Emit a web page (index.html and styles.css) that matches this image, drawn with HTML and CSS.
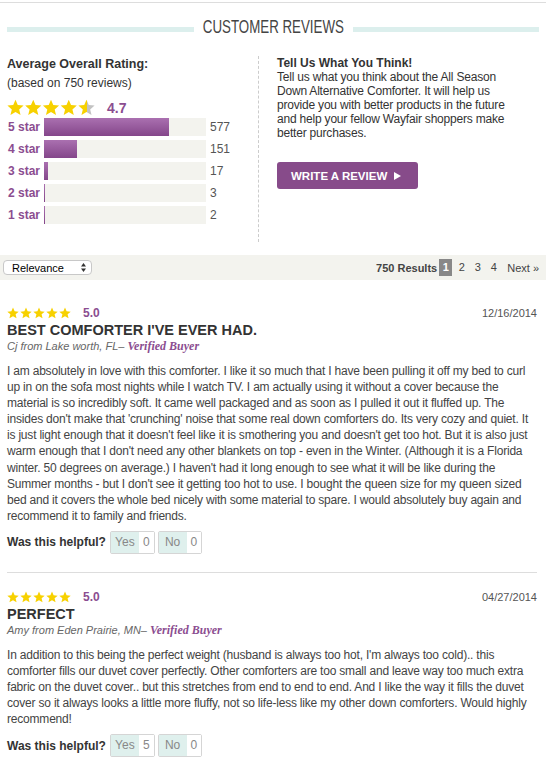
FILE: index.html
```html
<!DOCTYPE html>
<html lang="en">
<head>
    <meta charset="UTF-8">
    <meta name="viewport" content="width=device-width, initial-scale=1.0">
    <title>Customer Reviews</title>
    <link rel="stylesheet" href="styles.css">
</head>
<body>
    <div class="top-line"></div>
    <div class="page">
        <!-- Section heading -->
        <div class="section-title">
            <span class="rule"></span>
            <h2><span>CUSTOMER REVIEWS</span></h2>
            <span class="rule"></span>
        </div>

        <!-- Rating summary + write a review -->
        <div class="summary">
            <div class="overall">
                <div class="overall-title">Average Overall Rating:</div>
                <div class="overall-count">(based on 750 reviews)</div>
                <div class="overall-stars">
                    <svg width="88" height="17" viewBox="0 0 88 17">
                        <defs>
                            <linearGradient id="star-half">
                                <stop offset="52%" stop-color="#f7d100"/>
                                <stop offset="52%" stop-color="#c2c2c2"/>
                            </linearGradient>
                            <symbol id="star" viewBox="0 0 24 24">
                                <polygon points="12,1 15.2,8.6 23.4,9.3 17.2,14.7 19.1,22.7 12,18.4 4.9,22.7 6.8,14.7 0.6,9.3 8.8,8.6"/>
                            </symbol>
                        </defs>
                        <use href="#star" x="0" width="17" height="17" fill="#f7d100"/>
                        <use href="#star" x="17.75" width="17" height="17" fill="#f7d100"/>
                        <use href="#star" x="35.5" width="17" height="17" fill="#f7d100"/>
                        <use href="#star" x="53.25" width="17" height="17" fill="#f7d100"/>
                        <use href="#star" x="71" width="17" height="17" fill="url(#star-half)"/>
                    </svg>
                    <span class="overall-score">4.7</span>
                </div>
                <div class="bars">
                    <div class="bar-row">
                        <span class="bar-label">5 star</span>
                        <span class="bar-track"><span class="bar-fill" style="width: 76.9%"></span></span>
                        <span class="bar-count">577</span>
                    </div>
                    <div class="bar-row">
                        <span class="bar-label">4 star</span>
                        <span class="bar-track"><span class="bar-fill" style="width: 20.1%"></span></span>
                        <span class="bar-count">151</span>
                    </div>
                    <div class="bar-row">
                        <span class="bar-label">3 star</span>
                        <span class="bar-track"><span class="bar-fill" style="width: 2.3%"></span></span>
                        <span class="bar-count">17</span>
                    </div>
                    <div class="bar-row">
                        <span class="bar-label">2 star</span>
                        <span class="bar-track"><span class="bar-fill" style="width: 0.4%"></span></span>
                        <span class="bar-count">3</span>
                    </div>
                    <div class="bar-row">
                        <span class="bar-label">1 star</span>
                        <span class="bar-track"><span class="bar-fill" style="width: 0.3%"></span></span>
                        <span class="bar-count">2</span>
                    </div>
                </div>
            </div>

            <div class="tell-us">
                <div class="tell-us-title">Tell Us What You Think!</div>
                <p>Tell us what you think about the All Season Down Alternative Comforter. It will help us provide you with better products in the future and help your fellow Wayfair shoppers make better purchases.</p>
                <a href="#" class="write-btn">WRITE A REVIEW
                    <svg width="7" height="8" viewBox="0 0 7 8"><polygon points="0,0 7,4 0,8" fill="#fff"/></svg>
                </a>
            </div>
        </div>

        <!-- Sort + pagination -->
        <div class="toolbar">
            <div class="sort">
                <span>Relevance</span>
                <svg width="5" height="9" viewBox="0 0 5 9">
                    <polygon points="2.5,0 5,3.5 0,3.5" fill="#333"/>
                    <polygon points="0,5.5 5,5.5 2.5,9" fill="#333"/>
                </svg>
            </div>
            <div class="pager">
                <span class="results">750 Results</span>
                <span class="page-num current">1</span>
                <a href="#" class="page-num">2</a>
                <a href="#" class="page-num">3</a>
                <a href="#" class="page-num">4</a>
                <a href="#" class="next">Next &raquo;</a>
            </div>
        </div>

        <!-- Reviews -->
        <div class="reviews">
            <div class="review">
                <div class="review-top">
                    <div class="review-rating">
                        <svg width="64" height="12" viewBox="0 0 64 12" fill="#f7d100">
                            <use href="#star" x="0" width="12" height="12"/>
                            <use href="#star" x="13" width="12" height="12"/>
                            <use href="#star" x="26" width="12" height="12"/>
                            <use href="#star" x="39" width="12" height="12"/>
                            <use href="#star" x="52" width="12" height="12"/>
                        </svg>
                        <span class="review-score">5.0</span>
                    </div>
                    <span class="review-date">12/16/2014</span>
                </div>
                <h3 class="review-title">BEST COMFORTER I'VE EVER HAD.</h3>
                <div class="review-author">Cj from Lake worth, FL&ndash; <span class="verified">Verified Buyer</span></div>
                <p class="review-text">I am absolutely in love with this comforter. I like it so much that I have been pulling it off my bed to curl up in on the sofa most nights while I watch TV. I am actually using it without a cover because the material is so incredibly soft. It came well packaged and as soon as I pulled it out it fluffed up. The insides don't make that 'crunching' noise that some real down comforters do. Its very cozy and quiet. It is just light enough that it doesn't feel like it is smothering you and doesn't get too hot. But it is also just warm enough that I don't need any other blankets on top - even in the Winter. (Although it is a Florida winter. 50 degrees on average.) I haven't had it long enough to see what it will be like during the Summer months - but I don't see it getting too hot to use. I bought the queen size for my queen sized bed and it covers the whole bed nicely with some material to spare. I would absolutely buy again and recommend it to family and friends.</p>
                <div class="helpful">
                    <span class="helpful-label">Was this helpful?</span>
                    <a href="#" class="vote"><span class="vote-label">Yes</span><span class="vote-count">0</span></a>
                    <a href="#" class="vote"><span class="vote-label">No</span><span class="vote-count">0</span></a>
                </div>
            </div>

            <div class="review">
                <div class="review-top">
                    <div class="review-rating">
                        <svg width="64" height="12" viewBox="0 0 64 12" fill="#f7d100">
                            <use href="#star" x="0" width="12" height="12"/>
                            <use href="#star" x="13" width="12" height="12"/>
                            <use href="#star" x="26" width="12" height="12"/>
                            <use href="#star" x="39" width="12" height="12"/>
                            <use href="#star" x="52" width="12" height="12"/>
                        </svg>
                        <span class="review-score">5.0</span>
                    </div>
                    <span class="review-date">04/27/2014</span>
                </div>
                <h3 class="review-title">PERFECT</h3>
                <div class="review-author">Amy from Eden Prairie, MN&ndash; <span class="verified">Verified Buyer</span></div>
                <p class="review-text">In addition to this being the perfect weight (husband is always too hot, I'm always too cold).. this comforter fills our duvet cover perfectly. Other comforters are too small and leave way too much extra fabric on the duvet cover.. but this stretches from end to end to end. And I like the way it fills the duvet cover so it always looks a little more fluffy, not so life-less like my other down comforters. Would highly recommend!</p>
                <div class="helpful">
                    <span class="helpful-label">Was this helpful?</span>
                    <a href="#" class="vote"><span class="vote-label">Yes</span><span class="vote-count">5</span></a>
                    <a href="#" class="vote"><span class="vote-label">No</span><span class="vote-count">0</span></a>
                </div>
            </div>
        </div>
    </div>
</body>
</html>
```

FILE: styles.css
```css
/* General Reset */
* {
    margin: 0;
    padding: 0;
    box-sizing: border-box;
}

body {
    font-family: "Liberation Sans", Arial, sans-serif;
    color: #444;
    background-color: #ffffff;
}

a {
    text-decoration: none;
    color: inherit;
}

.top-line {
    margin-top: 2px;
    border-top: 1px solid #dddddd;
}

.page {
    padding: 0 7px;
}

/* Section heading */
.section-title {
    display: flex;
    align-items: center;
    height: 26px;
    margin-top: 11px;
}

.rule {
    flex: 1;
    height: 5px;
    margin-top: 5px;
    background-color: #dcefed;
}

.section-title h2 {
    width: 141px;
    margin: 0 9px;
    display: flex;
    justify-content: center;
    font-size: 18px;
    font-weight: normal;
    color: #444;
}

.section-title h2 span {
    white-space: nowrap;
    transform: scaleX(0.74);
}

/* Summary */
.summary {
    display: flex;
    height: 186px;
    margin-top: 16px;
}

.overall {
    width: 252px;
    border-right: 1px dashed #cccccc;
}

.overall-title {
    font-size: 12.5px;
    font-weight: bold;
    line-height: 16px;
    margin-bottom: 3px;
    color: #333;
}

.overall-count {
    font-size: 12px;
    line-height: 16px;
    color: #333;
}

.overall-stars {
    display: flex;
    align-items: center;
    height: 19px;
    margin-top: 7px;
}

.overall-score {
    margin-left: 12px;
    font-size: 14px;
    font-weight: bold;
    color: #8b4d90;
}

.bars {
    margin-top: 1px;
}

.bar-row {
    display: flex;
    align-items: center;
    height: 18px;
    margin-bottom: 4px;
}

.bar-label {
    width: 33px;
    text-align: right;
    font-size: 12px;
    font-weight: bold;
    color: #8b4d90;
}

.bar-track {
    display: flex;
    width: 162px;
    height: 18px;
    margin-left: 4px;
    background-color: #f3f3ee;
}

.bar-fill {
    min-width: 1px;
    height: 100%;
    background: linear-gradient(#aa70b0, #84468a);
}

.bar-count {
    margin-left: 4px;
    font-size: 12px;
    color: #555;
}

.tell-us {
    width: 262px;
    padding-left: 18px;
    font-size: 12px;
    line-height: 14px;
    color: #333;
}

.tell-us p {
    letter-spacing: -0.2px;
}

.tell-us-title {
    font-weight: bold;
}

.write-btn {
    display: flex;
    align-items: center;
    width: 141px;
    height: 27px;
    margin-top: 22px;
    padding-left: 14px;
    border-radius: 3px;
    background-color: #874b8a;
    color: #ffffff;
    font-size: 11.5px;
    font-weight: bold;
}

.write-btn svg {
    margin-left: 7px;
}

/* Toolbar */
.toolbar {
    display: flex;
    align-items: center;
    justify-content: space-between;
    height: 25px;
    margin: 13px -7px 0;
    padding: 0 7px 0 3px;
    background-color: #f3f3ee;
}

.sort {
    display: flex;
    align-items: center;
    justify-content: space-between;
    width: 89px;
    height: 15px;
    padding: 0 5px 0 8px;
    border: 1px solid #c8c8c8;
    border-radius: 4px;
    background-color: #ffffff;
    font-size: 11px;
    color: #000;
}

.pager {
    display: flex;
    align-items: center;
    font-size: 11px;
    color: #444;
}

.results {
    font-weight: bold;
    margin-right: 2px;
}

.page-num {
    width: 13px;
    height: 17px;
    line-height: 17px;
    margin-left: 3px;
    text-align: center;
}

.page-num.current {
    margin-left: 0;
    background-color: #888888;
    color: #ffffff;
    font-weight: bold;
}

.next {
    margin-left: 7px;
}

/* Reviews */
.reviews {
    margin-top: 9px;
}

.review {
    padding: 17px 0 18px;
    margin-right: 2px;
}

.review:first-child {
    border-bottom: 1px solid #dddddd;
}

.review-top {
    display: flex;
    align-items: center;
    justify-content: space-between;
    height: 14px;
}

.review-rating {
    display: flex;
    align-items: center;
}

.review-score {
    margin-left: 12px;
    font-size: 12px;
    font-weight: bold;
    color: #8b4d90;
}

.review-date {
    font-size: 11px;
    color: #555;
}

.review-title {
    margin-top: 2px;
    font-size: 14.5px;
    line-height: 17px;
    color: #333;
}

.review-author {
    font-size: 11px;
    line-height: 14px;
    font-style: italic;
    color: #666;
}

.verified {
    font-family: "Liberation Serif", "Times New Roman", serif;
    font-size: 12px;
    font-weight: bold;
    color: #8b4d90;
}

.review-text {
    margin-top: 10px;
    font-size: 12px;
    line-height: 16.1px;
    letter-spacing: -0.2px;
    color: #444;
}

.helpful {
    display: flex;
    align-items: center;
    height: 23px;
    margin-top: 7px;
}

.helpful-label {
    margin-right: 4px;
    font-size: 12px;
    font-weight: bold;
    color: #333;
}

.vote {
    display: flex;
    height: 23px;
    margin-right: 3px;
    border: 1px solid #d5d5d5;
    border-radius: 2px;
    font-size: 12px;
    line-height: 21px;
    color: #888;
}

.vote-label {
    min-width: 28px;
    padding: 0 4px;
    text-align: center;
    background-color: #dff0ed;
}

.vote-count {
    padding: 0 4px;
    background-color: #ffffff;
}
```
